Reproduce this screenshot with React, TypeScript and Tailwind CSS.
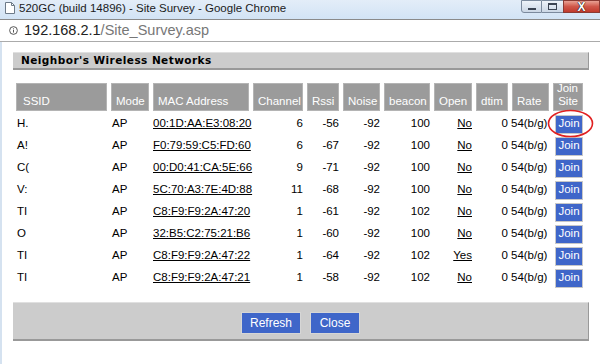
import React from 'react';

const ROWS = [
  { ssid: 'H.', mac: '00:1D:AA:E3:08:20', ch: 6, rssi: -56, beacon: 100, open: 'No' },
  { ssid: 'A!', mac: 'F0:79:59:C5:FD:60', ch: 6, rssi: -67, beacon: 100, open: 'No' },
  { ssid: 'C(', mac: '00:D0:41:CA:5E:66', ch: 9, rssi: -71, beacon: 100, open: 'No' },
  { ssid: 'V:', mac: '5C:70:A3:7E:4D:88', ch: 11, rssi: -68, beacon: 100, open: 'No' },
  { ssid: 'TI', mac: 'C8:F9:F9:2A:47:20', ch: 1, rssi: -61, beacon: 102, open: 'No' },
  { ssid: 'O', mac: '32:B5:C2:75:21:B6', ch: 1, rssi: -60, beacon: 100, open: 'No' },
  { ssid: 'TI', mac: 'C8:F9:F9:2A:47:22', ch: 1, rssi: -64, beacon: 102, open: 'Yes' },
  { ssid: 'TI', mac: 'C8:F9:F9:2A:47:21', ch: 1, rssi: -58, beacon: 102, open: 'No' },
];

const COLS = 'grid grid-cols-[91px_38px_96px_50px_32px_37px_46px_38px_32px_37px_30px] gap-x-[4px]';

function Head({ children, className = '' }: { children: React.ReactNode; className?: string }) {
  return (
    <div className={`bg-[#9b9b9b] border border-[#b4b4b4] h-[28px] flex items-end pb-[2px] px-[4px] text-white leading-[13px] ${className}`}>
      {children}
    </div>
  );
}

export default function App() {
  return (
    <div className="w-[600px] h-[364px] bg-white overflow-hidden relative font-['Liberation_Sans',Arial,sans-serif]">
      {/* window title bar */}
      <div className="h-[19px] bg-gradient-to-b from-[#e3edf8] to-[#d2e3f5] flex items-start relative">
        <svg width="10" height="12" viewBox="0 0 10 12" className="ml-[5px] mt-[2px]">
          <path d="M0.5 0.5h6l3 3v8h-9z" fill="#fff" stroke="#6d7a88" />
          <path d="M6.5 0.5v3h3" fill="none" stroke="#6d7a88" />
        </svg>
        <span className="ml-[4px] mt-[1px] text-[11.5px] text-[#1b1b1b] leading-[14px]">
          520GC (build 14896) - Site Survey - Google Chrome
        </span>
        <div className="ml-auto flex h-[13px]">
          <div className="w-[21px] border border-[#7b8a9d] rounded-bl-[3px] bg-gradient-to-b from-[#eef3f9] to-[#cbd7e5] flex items-end justify-center pb-[2px]">
            <div className="w-[8px] h-[2px] bg-[#3b4452]" />
          </div>
          <div className="w-[21px] border-y border-[#7b8a9d] bg-gradient-to-b from-[#eef3f9] to-[#cbd7e5] flex items-center justify-center">
            <div className="w-[9px] h-[7px] border-[1.5px] border-t-[2.5px] border-[#3b4452]" />
          </div>
          <div className="w-[37px] border border-[#8a3a33] bg-gradient-to-b from-[#e8a093] via-[#d0574a] to-[#c0392b] flex items-center justify-center">
            <span className="text-white font-bold text-[12px] leading-none [text-shadow:0_0_1px_#000,0_0_1px_#000]">X</span>
          </div>
        </div>
      </div>

      {/* address bar */}
      <div className="h-[23px] border-t border-[#8a8a8a] border-b border-b-[#ababab] bg-white flex items-center pl-[9px]">
        <svg width="9" height="9" viewBox="0 0 10 10">
          <circle cx="5" cy="5" r="4.3" fill="none" stroke="#444" strokeWidth="1" />
          <rect x="4.5" y="4.3" width="1" height="3" fill="#444" />
          <rect x="4.5" y="2.6" width="1" height="1" fill="#444" />
        </svg>
        <span className="ml-[6px] text-[14.5px] leading-none">
          <span className="text-[#222]">192.168.2.1</span>
          <span className="text-[#777]">/Site_Survey.asp</span>
        </span>
      </div>

      {/* page body */}
      <div className="border-l-[2px] border-[#d5e2f0] h-full pl-[11px] pr-[11px] pt-[10px]">
        <div className="w-[576px] h-[18px] bg-[#cccccc] border-t border-[#e0e0e0] border-b-[2px] border-b-[#999] border-r border-r-[#999] pl-[8px] flex items-center font-['DejaVu_Sans',Verdana,sans-serif] font-bold text-[10.5px] tracking-[0.45px] text-black">
          Neighbor's Wireless Networks
        </div>

        <div className="mt-[13px] ml-[3px] text-[11.5px] text-black">
          <div className={COLS}>
            <Head className="pl-[6px]">SSID</Head>
            <Head>Mode</Head>
            <Head>MAC Address</Head>
            <Head className="px-[2px]">Channel</Head>
            <Head>Rssi</Head>
            <Head className="px-[2px]">Noise</Head>
            <Head className="px-[2px]">beacon</Head>
            <Head className="px-[2px]">Open</Head>
            <Head>dtim</Head>
            <Head>Rate</Head>
            <Head className="flex-col items-center justify-end pb-[2px] px-0">
              <span>Join</span>
              <span>Site</span>
            </Head>
          </div>
          <div className="mt-[2px]">
            {ROWS.map((r, i) => (
              <div key={i} className={`${COLS} h-[22px] items-center`}>
                <span className="pl-[1px]">{r.ssid}</span>
                <span className="pl-[1px]">AP</span>
                <span className="underline">{r.mac}</span>
                <span className="text-right">{r.ch}</span>
                <span className="text-right">{r.rssi}</span>
                <span className="text-right">-92</span>
                <span className="text-right">{r.beacon}</span>
                <span className="text-right underline">{r.open}</span>
                <span className="text-right">0</span>
                <span className="-ml-[1px]">54(b/g)</span>
                <span className="flex justify-end">
                  <span className="w-[28px] h-[19px] bg-[#3f66c9] border border-[#c8c8c8] text-white text-[11.5px] flex items-center justify-center">
                    Join
                  </span>
                </span>
              </div>
            ))}
          </div>
        </div>

        {/* footer */}
        <div className="mt-[13px] w-[576px] h-[39px] bg-[#cccccc] border-t border-[#e0e0e0] border-b-[2px] border-b-[#999] border-r border-r-[#999] flex items-center justify-center gap-[9px] pt-[3px]">
          <span className="w-[60px] h-[22px] bg-[#3f66c9] border border-[#d6d6d6] text-white text-[12px] flex items-center justify-center">
            Refresh
          </span>
          <span className="w-[50px] h-[22px] bg-[#3f66c9] border border-[#d6d6d6] text-white text-[12px] flex items-center justify-center">
            Close
          </span>
        </div>
      </div>

      {/* red annotation circle */}
      <svg className="absolute left-[547px] top-[109px]" width="47" height="29" viewBox="0 0 47 29">
        <ellipse cx="23.5" cy="14.5" rx="22" ry="13" fill="none" stroke="#e02020" strokeWidth="1.6" />
      </svg>
    </div>
  );
}
